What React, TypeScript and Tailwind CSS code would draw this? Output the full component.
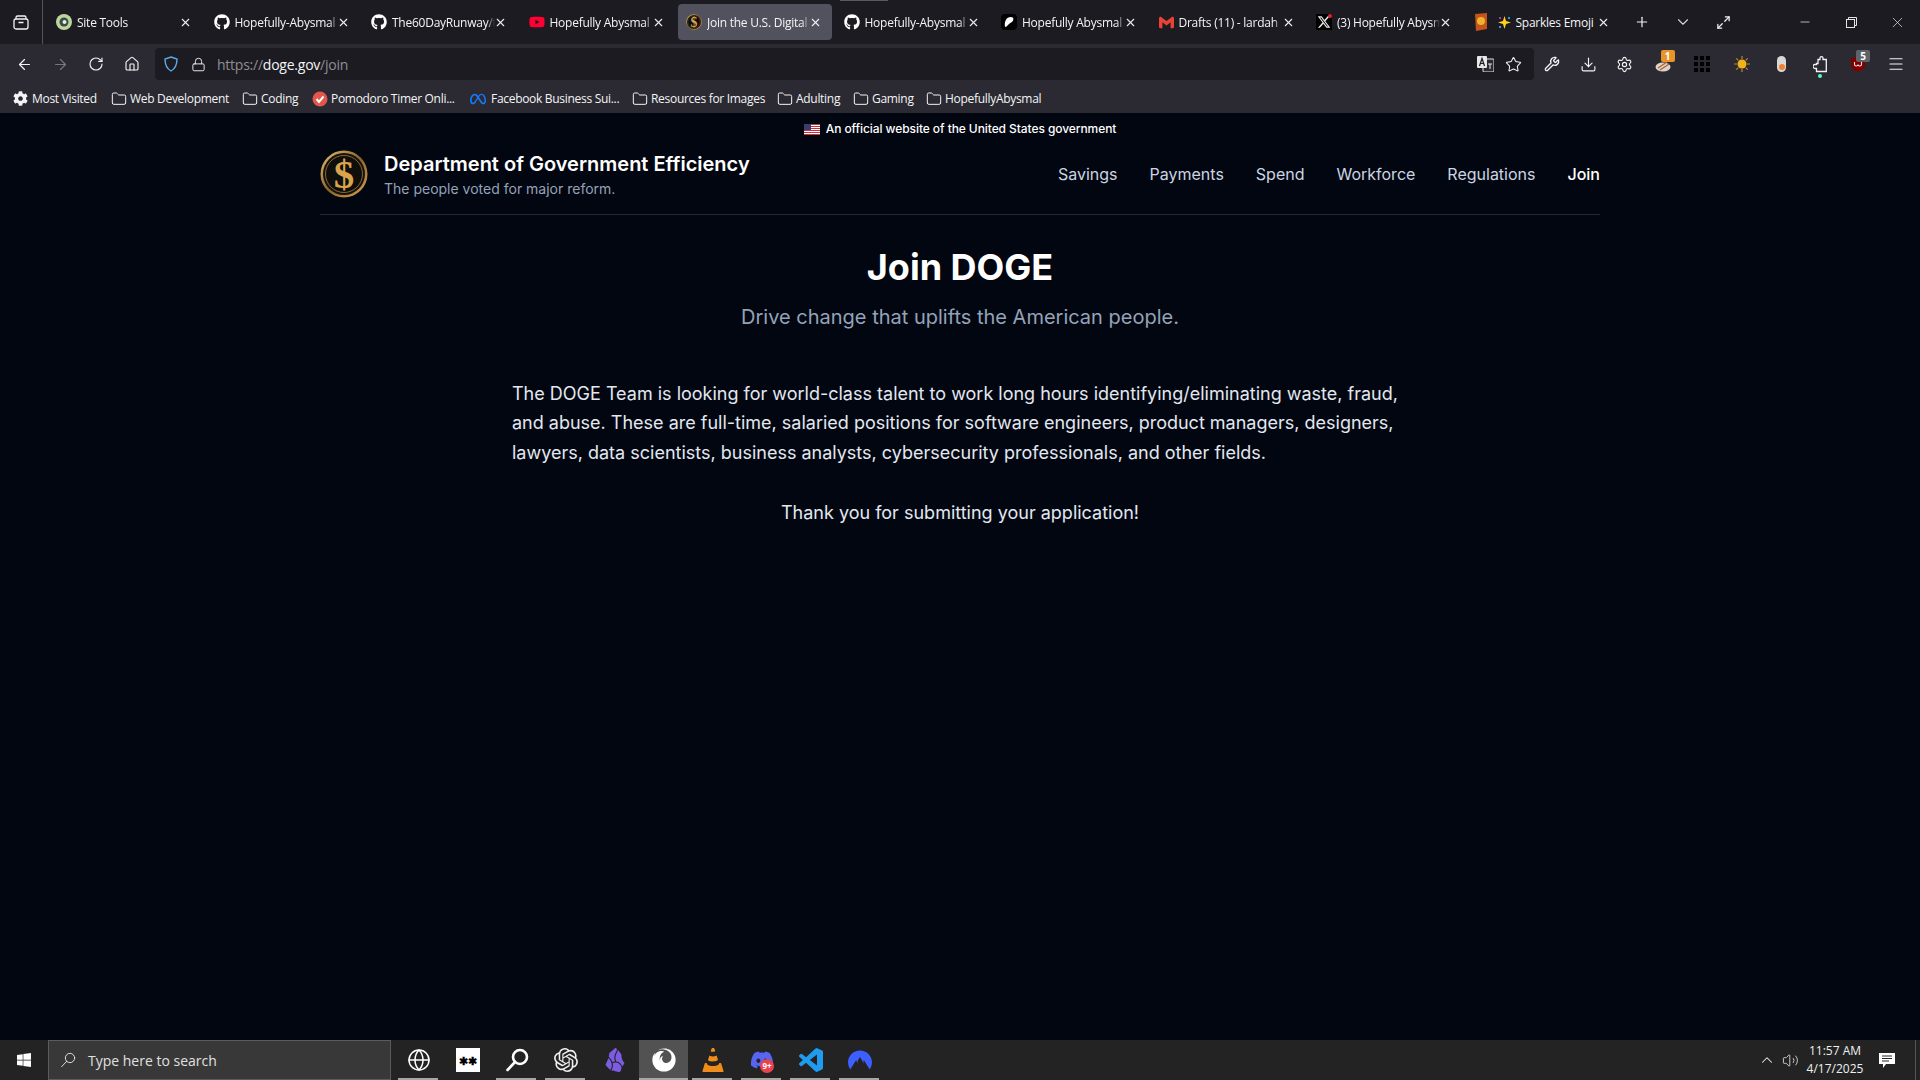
import React from "react";
import {
  ArrowLeft, ArrowRight, RotateCw, Home, Lock, Star, Wrench, Download, Settings, Menu, X, Plus, ChevronDown, ChevronUp,
  Maximize2, Minus, Folder, Globe, Volume2,
} from "lucide-react";
import { FaGithub, FaYoutube, FaWindows, FaDiscord, FaFirefox, FaCog } from "react-icons/fa";
import { FaXTwitter } from "react-icons/fa6";
import { SiGmail, SiMeta, SiOpenai, SiObsidian, SiVlcmediaplayer, SiNordvpn } from "react-icons/si";

const ui = { fontFamily: '"Open Sans", "Noto Sans", sans-serif' };
const inter = { fontFamily: 'Inter, "Noto Sans", sans-serif' };

function CoinLogo({ size }: { size: number }) {
  return (
    <svg width={size} height={size} viewBox="0 0 48 48" className="shrink-0">
      <defs>
        <linearGradient id={`ring${size}`} x1="0" y1="0" x2="1" y2="1">
          <stop offset="0" stopColor="#e8c078" />
          <stop offset="0.5" stopColor="#8a6428" />
          <stop offset="1" stopColor="#d9a653" />
        </linearGradient>
      </defs>
      <circle cx="24" cy="24" r="23.5" fill={`url(#ring${size})`} />
      <circle cx="24" cy="24" r="21" fill="#15120e" />
      <circle cx="24" cy="24" r="18.5" fill="#0f0e0d" stroke="#a67c34" strokeWidth="0.8" />
      <text x="24" y="38" textAnchor="middle" fontSize="41" fontWeight="700" fill="#d8a44c" fontFamily="'Liberation Serif', serif">$</text>
    </svg>
  );
}

function SiteToolsIcon() {
  return (
    <svg width="16" height="16" viewBox="0 0 16 16" className="shrink-0">
      <circle cx="8" cy="8" r="8" fill="#b9d79a" />
      <circle cx="8" cy="8" r="4.500" fill="#3d4a45" />
      <circle cx="8.500" cy="8" r="2" fill="#e8ede4" />
    </svg>
  );
}

function PetalIcon() {
  return (
    <span className="w-4 h-4 bg-black rounded-sm flex items-center justify-center shrink-0">
      <svg width="12" height="12" viewBox="0 0 12 12"><path d="M2 11C1 6 3 1 8 1c3 0 3 3 1 5-2 1-3 2-4 3-1 1-2 2-3 2z" fill="#fff" /></svg>
    </span>
  );
}

function XIcon() {
  return (
    <span className="relative w-4 h-4 bg-black flex items-center justify-center shrink-0">
      <FaXTwitter size={14} color="#e8e8e8" />
      <span className="absolute top-0 right-0 w-1 h-1 rounded-full bg-[#e0242f]" />
    </span>
  );
}

function SparklesIcons() {
  return (
    <span className="flex items-center gap-[10px] shrink-0">
      <svg width="14" height="18" viewBox="0 0 14 18">
        <path d="M1 1l12-1v16l-11 2z" fill="#c2541c" />
        <circle cx="7" cy="8" r="4" fill="#f0b42c" />
      </svg>
      <svg width="13" height="13" viewBox="0 0 13 13">
        <path d="M6.500 0 8 5l5 1.500-5 1.500-1.500 5L5 8 0 6.500 5 5z" fill="#ffd21e" />
        <circle cx="2" cy="2" r="1" fill="#e63bb0" />
        <circle cx="11" cy="2" r="1" fill="#2ad0e8" />
        <circle cx="2" cy="11" r="1" fill="#2ad0e8" />
      </svg>
    </span>
  );
}

function Tab({ icon, title, active, wide }: { icon: React.ReactNode; title: string; active?: boolean; wide?: boolean }) {
  return (
    <div className={`relative w-[154px] h-[36px] shrink-0 rounded-[4px] flex items-center pl-[8px] gap-[5px] ${active ? "bg-[#52525e]" : ""}`}>
      {icon}
      <span className={`${wide ? "w-[86px]" : "w-[103px] [mask-image:linear-gradient(to_right,black_92%,transparent)]"} overflow-hidden whitespace-nowrap text-[12px] tracking-[-0.25px] mt-[2px] text-[#f4f4f5]`}>{title}</span>
      <X size={13} strokeWidth={2} color="#eeeeee" className="absolute left-[131px] top-[12px]" />
    </div>
  );
}

function Bookmark({ w, icon, label }: { w: number; icon: React.ReactNode; label: string }) {
  return (
    <div className="flex items-center gap-[3px] shrink-0 text-[12px] tracking-[-0.3px] text-[#f4f4f5] whitespace-nowrap" style={{ width: w }}>
      {icon}
      <span>{label}</span>
    </div>
  );
}

const folder = <Folder size={16} strokeWidth={1.5} color="#f4f4f5" className="shrink-0" />;

function Slot({ w, children }: { w: number; children: React.ReactNode }) {
  return <div className="relative flex items-center justify-center shrink-0 h-full" style={{ width: w }}>{children}</div>;
}

function TaskIcon({ children, line, active }: { children: React.ReactNode; line?: boolean; active?: boolean }) {
  return (
    <div className={`relative w-[49px] h-full flex items-center justify-center shrink-0 ${active ? "bg-[#525252]" : ""}`}>
      {children}
      {line && <span className="absolute bottom-0 left-[4px] right-[5px] h-[2px] bg-[#a6a6a6]" />}
      {active && <span className="absolute bottom-0 left-0 right-0 h-[2px] bg-[#a6a6a6]" />}
    </div>
  );
}

function VsCode() {
  return (
    <svg width="24" height="24" viewBox="0 0 24 24">
      <path fill="#1f9cf0" d="M23.15 2.587L18.21.21a1.494 1.494 0 0 0-1.705.29l-9.46 8.63-4.12-3.128a.999.999 0 0 0-1.276.057L.327 7.261A1 1 0 0 0 .326 8.74L3.899 12 .326 15.26a1 1 0 0 0 .001 1.479L1.65 17.94a.999.999 0 0 0 1.276.057l4.12-3.128 9.46 8.63a1.492 1.492 0 0 0 1.704.29l4.942-2.377A1.5 1.5 0 0 0 24 20.06V3.939a1.5 1.5 0 0 0-.85-1.352zm-5.146 14.861L10.826 12l7.178-5.448v10.896z" />
    </svg>
  );
}

function Magnifier({ size, width, color }: { size: number; width: number; color: string }) {
  return (
    <svg width={size} height={size} viewBox="0 0 24 24" fill="none" stroke={color} strokeWidth={width} strokeLinecap="round">
      <circle cx="15" cy="9" r="7" />
      <path d="M10 14 2.500 22" />
    </svg>
  );
}

export default function App() {
  return (
    <div className="w-[1920px] h-[1080px] overflow-hidden flex flex-col bg-[#020611]">
      {/* Tab strip */}
      <div style={ui} className="relative h-[44px] shrink-0 bg-[#1c1b22] flex items-center">
        <span className="absolute top-0 left-[840px] w-[48px] h-px bg-[#5a5a62]" />
        <div className="w-[42px] h-full flex items-center justify-center border-r border-[#55555c] shrink-0 box-content">
          <svg width="16" height="16" viewBox="0 0 16 16" fill="none" stroke="#f4f4f5" strokeWidth="1.3">
            <rect x="1" y="5" width="14" height="10" rx="2" />
            <path d="M3 5V3.500A1.500 1.500 0 0 1 4.500 2h7A1.500 1.500 0 0 1 13 3.500V5M5.500 8.500h5" />
          </svg>
        </div>
        <div className="flex items-center gap-[3.5px] ml-[5px]">
          <Tab icon={<SiteToolsIcon />} title="Site Tools" />
          <Tab icon={<FaGithub size={16} color="#fff" className="shrink-0" />} title="Hopefully-Abysmal" />
          <Tab icon={<FaGithub size={16} color="#fff" className="shrink-0" />} title="The60DayRunway/the" />
          <Tab icon={<FaYoutube size={16} color="#ff0033" className="shrink-0" />} title="Hopefully Abysmal" />
          <Tab active icon={<CoinLogo size={16} />} title="Join the U.S. Digital" />
          <Tab icon={<FaGithub size={16} color="#fff" className="shrink-0" />} title="Hopefully-Abysmal" />
          <Tab icon={<PetalIcon />} title="Hopefully Abysmal" />
          <Tab icon={<SiGmail size={15} color="#ea4335" className="shrink-0" />} title="Drafts (11) - lardah" />
          <Tab icon={<XIcon />} title="(3) Hopefully Abysmal" />
          <Tab wide icon={<SparklesIcons />} title="Sparkles Emoji" />
        </div>
        <div className="flex items-center ml-[8px]">
          <Slot w={29}><Plus size={16} color="#f4f4f5" strokeWidth={1.8} /></Slot>
          <Slot w={52}><ChevronDown size={18} color="#d4d4d8" strokeWidth={1.5} /></Slot>
          <Slot w={29}><Maximize2 size={15} color="#f4f4f5" strokeWidth={2} /></Slot>
        </div>
        <div className="flex items-center ml-auto">
          <Slot w={46}><Minus size={14} color="#e5e5e5" strokeWidth={1.3} /></Slot>
          <Slot w={46}>
            <svg width="11" height="11" viewBox="0 0 11 11" fill="none" stroke="#e5e5e5"><rect x="0.500" y="2.500" width="8" height="8" /><path d="M2.500 2.500v-2h8v8h-2" /></svg>
          </Slot>
          <Slot w={46}><X size={17} color="#e5e5e5" strokeWidth={1} /></Slot>
        </div>
      </div>

      {/* Toolbar */}
      <div style={ui} className="h-[40px] shrink-0 bg-[#2b2a33] flex items-center pl-[6px] pr-[5px]">
        <Slot w={36}><ArrowLeft size={17} color="#f4f4f5" strokeWidth={1.7} /></Slot>
        <Slot w={36}><ArrowRight size={17} color="#77767d" strokeWidth={1.7} /></Slot>
        <Slot w={36}><RotateCw size={16} color="#f4f4f5" strokeWidth={1.7} /></Slot>
        <Slot w={35}><Home size={16} color="#f4f4f5" strokeWidth={1.7} /></Slot>
        <div className="ml-[6px] flex-1 h-[32px] bg-[#1c1b22] rounded-[4px] flex items-center pl-[8px] pr-[12px]">
          <svg width="16" height="16" viewBox="0 0 16 16" fill="none" stroke="#5ea9e8" strokeWidth="1.4" className="shrink-0">
            <path d="M8 1 14 3c0 6-1.500 9.500-6 12C3.500 12.500 2 9 2 3z" />
          </svg>
          <Lock size={15} color="#e4e4e7" strokeWidth={1.6} className="ml-[12px] shrink-0" />
          <span className="ml-[11px] text-[14px] tracking-[-0.24px] text-[#8e8e94] whitespace-nowrap">https://<span className="text-[#f4f4f5]">doge.gov</span>/join</span>
          <div className="ml-auto flex items-center gap-[11px]">
            <svg width="17" height="16" viewBox="0 0 17 16" className="shrink-0">
              <rect x="6" y="3" width="11" height="13" rx="1" fill="#2b2a33" stroke="#e8e8e8" />
              <rect x="0" y="0" width="10" height="12" rx="1" fill="#e8e8e8" />
              <path d="M2.500 10 5 2.500 7.500 10M3.500 7.500h3" stroke="#1c1b22" strokeWidth="1.200" fill="none" />
              <path d="M11 8h4M13 8v5" stroke="#e8e8e8" strokeWidth="1" />
            </svg>
            <Star size={17} color="#f4f4f5" strokeWidth={1.5} />
          </div>
        </div>
        <Slot w={36}><Wrench size={16} color="#f4f4f5" strokeWidth={2} /></Slot>
        <Slot w={36}><Download size={17} color="#f4f4f5" strokeWidth={1.6} /></Slot>
        <Slot w={37.5}><Settings size={17} color="#f4f4f5" strokeWidth={1.6} /></Slot>
        <Slot w={39}>
          <svg width="16" height="13" viewBox="0 0 16 13" className="mt-[3px]">
            <ellipse cx="8" cy="8" rx="7.500" ry="4.500" fill="#d9d4cc" />
            <path d="M3 9 12 3M5 11l9-6" stroke="#b8652c" strokeWidth="1.500" />
          </svg>
          <span className="absolute top-[6px] left-[17px] w-[14px] h-[12px] bg-[#e8942a] rounded-[2px] text-white text-[10px] font-bold leading-[12px] text-center">1</span>
        </Slot>
        <Slot w={39.5}>
          <div className="grid grid-cols-3 gap-[2px]">
            {Array.from({ length: 9 }).map((_, i) => <span key={i} className="w-[4px] h-[4px] bg-black" />)}
          </div>
        </Slot>
        <Slot w={40}>
          <svg width="16" height="16" viewBox="0 0 16 16">
            <path d="M8 0v3M8 13v3M0 8h3M13 8h3M2.300 2.300l2 2M11.700 11.700l2 2M13.700 2.300l-2 2M4.300 11.700l-2 2" stroke="#b58b2e" strokeWidth="1.200" />
            <circle cx="8" cy="8" r="4.500" fill="#f0b31c" />
          </svg>
        </Slot>
        <Slot w={39}>
          <span className="w-[9px] h-[16px] rounded-full bg-[#d8d8d8] flex items-end justify-center pb-[2px]">
            <span className="w-[6px] h-[6px] rounded-full bg-[#f08030]" />
          </span>
        </Slot>
        <Slot w={38}>
          <svg width="14" height="17" viewBox="0 0 14 17" fill="none" stroke="#f4f4f5" strokeWidth="1.300">
            <path d="M5 3.500h2V2.200a1.500 1.500 0 0 1 3 0v1.300h3.300v12H3.500v-3H2a2 2 0 0 1 0-4h1.500V7.500H5z" />
          </svg>
          <span className="absolute top-[30px] left-[17px] w-[4px] h-[4px] rounded-full bg-[#54ffbd]" />
        </Slot>
        <Slot w={38}>
          <svg width="14" height="16" viewBox="0 0 14 16">
            <path d="M0 2h14v7c0 3-3 5-7 7-4-2-7-4-7-7z" fill="#800000" />
            <path d="M3.500 6v2.500c0 2 3.500 2 3.500 0 0 2 3.500 2 3.500 0V6" stroke="#f0e0e0" strokeWidth="1.100" fill="none" />
          </svg>
          <span className="absolute top-[6px] left-[17px] w-[14px] h-[12px] bg-[#5f6368] rounded-[2px] text-white text-[10px] font-bold leading-[12px] text-center">5</span>
        </Slot>
        <Slot w={38}><Menu size={18} color="#f4f4f5" strokeWidth={1.5} /></Slot>
      </div>

      {/* Bookmarks */}
      <div style={ui} className="h-[29px] shrink-0 bg-[#2b2a33] flex items-center pl-[13px]">
        <Bookmark w={98} icon={<FaCog size={15} color="#f4f4f5" className="shrink-0 mr-[1px]" />} label="Most Visited" />
        <Bookmark w={131} icon={folder} label="Web Development" />
        <Bookmark w={70} icon={folder} label="Coding" />
        <Bookmark w={158} icon={
          <svg width="16" height="16" viewBox="0 0 16 16" className="shrink-0">
            <circle cx="8" cy="8" r="7.500" fill="#e2574c" />
            <path d="M4.500 8 7 11l4.500-5.500" fill="none" stroke="#fff" strokeWidth="2" />
          </svg>} label="Pomodoro Timer Onli..." />
        <Bookmark w={162} icon={<SiMeta size={16} color="#1877f2" className="shrink-0 mr-[2px]" />} label="Facebook Business Sui..." />
        <Bookmark w={145} icon={folder} label="Resources for Images" />
        <Bookmark w={76} icon={folder} label="Adulting" />
        <Bookmark w={73} icon={folder} label="Gaming" />
        <Bookmark w={130} icon={folder} label="HopefullyAbysmal" />
      </div>

      {/* Page */}
      <div style={inter} className="flex-1 min-h-0 flex flex-col items-center text-white">
        <div className="h-[32px] flex items-center justify-center gap-[6px] w-full">
          <svg width="16" height="11" viewBox="0 0 16 11" className="shrink-0">
            <rect width="16" height="11" fill="#fff" />
            <path d="M0 .500h16M0 2.500h16M0 4.500h16M0 6.500h16M0 8.500h16M0 10.500h16" stroke="#c8313e" strokeWidth="1" />
            <rect width="7" height="6" fill="#3c3b6e" />
          </svg>
          <span className="text-[12px] tracking-[-0.08px] font-medium text-white">An official website of the United States government</span>
        </div>
        <header className="w-[1280px] h-[70px] border-b border-[#1e293b] flex items-center justify-between pb-[12px]">
          <div className="flex items-center gap-[16px]">
            <CoinLogo size={48} />
            <div className="flex flex-col mt-[2px]">
              <span className="text-[20px] leading-[28px] font-semibold text-white">Department of Government Efficiency</span>
              <span className="text-[14px] leading-[20px] mt-[1px] text-[#94a3b8]">The people voted for major reform.</span>
            </div>
          </div>
          <nav className="flex items-center gap-[32px] text-[16px] text-[#cbd5e1]">
            <span>Savings</span>
            <span>Payments</span>
            <span>Spend</span>
            <span>Workforce</span>
            <span>Regulations</span>
            <span className="text-white font-medium">Join</span>
          </nav>
        </header>
        <h1 className="mt-[32px] text-[36px] leading-[40px] font-bold text-white">Join DOGE</h1>
        <p className="mt-[16px] text-[20px] leading-[28px] text-[#94a3b8]">Drive change that uplifts the American people.</p>
        <div className="mt-[48px] w-[896px] text-[18px] leading-[29.250px] text-[#e2e8f0]">
          <p>The DOGE Team is looking for world-class talent to work long hours identifying/eliminating waste, fraud, and abuse. These are full-time, salaried positions for software engineers, product managers, designers, lawyers, data scientists, business analysts, cybersecurity professionals, and other fields.</p>
          <p className="mt-[31.500px] text-center">Thank you for submitting your application!</p>
        </div>
      </div>

      {/* Taskbar */}
      <div style={ui} className="h-[40px] shrink-0 bg-[#232323] flex items-center">
        <div className="w-[48px] h-full flex items-center justify-center shrink-0"><FaWindows size={16} color="#fff" /></div>
        <div className="w-[343px] h-full bg-[#383838] border border-[#5c5c5c] flex items-center pl-[11px] gap-[12px] shrink-0">
          <Magnifier size={16} width={1.4} color="#e5e5e5" />
          <span className="text-[14px] text-[#e0e0e0]">Type here to search</span>
        </div>
        <div className="h-full flex ml-[3px]">
          <TaskIcon line><Globe size={24} color="#fff" strokeWidth={1.5} /></TaskIcon>
          <TaskIcon><span className="w-6 h-6 bg-white flex items-center justify-center text-black text-[11px] font-bold leading-none">✱✱</span></TaskIcon>
          <TaskIcon line><Magnifier size={24} width={2.600} color="#ffffff" /></TaskIcon>
          <TaskIcon line><SiOpenai size={24} color="#f0f0f0" /></TaskIcon>
          <TaskIcon><SiObsidian size={24} color="#7c5ce0" /></TaskIcon>
          <TaskIcon active><FaFirefox size={24} color="#fff" /></TaskIcon>
          <TaskIcon line><SiVlcmediaplayer size={24} color="#f08c1a" /></TaskIcon>
          <TaskIcon line>
            <FaDiscord size={24} color="#5865f2" />
            <span className="absolute top-[19px] left-[23px] w-[14px] h-[14px] rounded-full bg-[#e8434f] text-white text-[8px] font-bold leading-[14px] text-center">9+</span>
          </TaskIcon>
          <TaskIcon line><VsCode /></TaskIcon>
          <TaskIcon line><SiNordvpn size={24} color="#3e5fff" /></TaskIcon>
        </div>
        <div className="ml-auto h-full flex items-center">
          <Slot w={23}><ChevronUp size={18} color="#f0f0f0" strokeWidth={1.4} /></Slot>
          <Slot w={24}><Volume2 size={17} color="#e5e5e5" strokeWidth={1.2} /></Slot>
          <div className="w-[66px] flex flex-col items-center text-[12px] leading-[18px] text-[#f0f0f0]">
            <span>11:57 AM</span>
            <span>4/17/2025</span>
          </div>
          <div className="ml-[2px] flex h-full">
            <Slot w={34}>
              <svg width="16" height="15" viewBox="0 0 16 15"><path d="M0 0h16v11H7l-3 4v-4H0z" fill="#fff" /><path d="M3 3h10M3 5.500h10M3 8h7" stroke="#272727" strokeWidth="1" /></svg>
            </Slot>
          </div>
          <div className="ml-[11px] w-[5px] h-full border-l border-[#555]" />
        </div>
      </div>
    </div>
  );
}
